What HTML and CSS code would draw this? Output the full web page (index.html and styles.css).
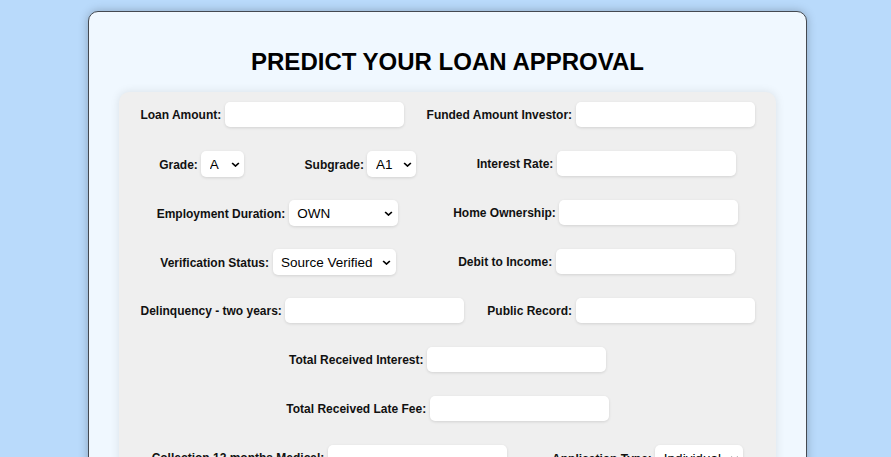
FILE: index.html
```html
<!DOCTYPE html>
<html lang="en">
<head>
<meta charset="utf-8">
<title>Predict Your Loan Approval</title>
<link rel="stylesheet" href="styles.css">
</head>
<body>
<div class="container">
  <h1 class="title">PREDICT YOUR LOAN APPROVAL</h1>
  <form class="form">
    <div class="row">
      <label class="field">Loan Amount: <input class="input" type="text"></label>
      <label class="field">Funded Amount Investor: <input class="input" type="text"></label>
    </div>
    <div class="row">
      <label class="field">Grade: <select class="select sel-grade"><option>A</option><option>B</option><option>C</option></select></label>
      <label class="field">Subgrade: <select class="select sel-sub"><option>A1</option><option>A2</option></select></label>
      <label class="field">Interest Rate: <input class="input" type="text"></label>
    </div>
    <div class="row">
      <label class="field">Employment Duration: <select class="select sel-emp"><option>OWN</option><option>RENT</option><option>MORTGAGE</option></select></label>
      <label class="field">Home Ownership: <input class="input" type="text"></label>
    </div>
    <div class="row">
      <label class="field">Verification Status: <select class="select sel-ver"><option>Source Verified</option><option>Verified</option><option>Not Verified</option></select></label>
      <label class="field">Debit to Income: <input class="input" type="text"></label>
    </div>
    <div class="row">
      <label class="field">Delinquency - two years: <input class="input" type="text"></label>
      <label class="field">Public Record: <input class="input" type="text"></label>
    </div>
    <div class="row">
      <label class="field">Total Received Interest: <input class="input" type="text"></label>
    </div>
    <div class="row">
      <label class="field">Total Received Late Fee: <input class="input" type="text"></label>
    </div>
    <div class="row">
      <label class="field">Collection 12 months Medical: <input class="input" type="text"></label>
      <label class="field">Application Type: <select class="select sel-app"><option>Individual</option><option>Joint</option></select></label>
    </div>
  </form>
</div>
</body>
</html>
```

FILE: styles.css
```css
html, body {
  overflow: hidden;
}
body {
  margin: 0;
  padding: 11px 84px 30px 88px;
  background: #b9dafb;
  font-family: "Liberation Sans", Arial, sans-serif;
}
.container {
  border: 1px solid #444a52;
  border-radius: 10px;
  background: #f0f8ff;
  padding: 20px 30px 30px;
  box-shadow: 0 0 10px rgba(0, 0, 0, 0.25);
}
.title {
  margin: 16px 0;
  font-size: 24px;
  line-height: 27.6px;
  font-weight: bold;
  text-align: center;
  color: #000;
}
.form {
  display: flex;
  flex-direction: column;
  gap: 24px;
  padding: 10.5px 10px 10px;
  background: #efefef;
  border-radius: 10px;
  box-shadow: 0 0 10px rgba(0, 0, 0, 0.1);
}
.row {
  display: flex;
  justify-content: space-around;
  align-items: flex-start;
  height: 25px;
}
.field {
  display: flex;
  align-items: center;
  gap: 3.5px;
  padding-top: 1px;
  font-size: 12px;
  font-weight: bold;
  color: #111;
  white-space: nowrap;
}
.field .input,
.field .select {
  margin-top: -1px;
}
.input {
  width: 179px;
  height: 25px;
  box-sizing: border-box;
  border: none;
  border-radius: 5px;
  background: #fff;
  box-shadow: 0 1px 3px rgba(0, 0, 0, 0.12);
  padding: 4px 8px;
  font-family: "Liberation Sans", Arial, sans-serif;
  font-size: 13px;
  outline: none;
}
.select {
  -webkit-appearance: none;
  appearance: none;
  height: 26px;
  box-sizing: border-box;
  border: none;
  border-radius: 5px;
  background: #fff url("data:image/svg+xml,%3Csvg xmlns='http://www.w3.org/2000/svg' width='10' height='6' viewBox='0 0 10 6'%3E%3Cpath d='M1.2 1.2L5 4.8L8.8 1.2' fill='none' stroke='%23000' stroke-width='2'/%3E%3C/svg%3E") no-repeat right 5px center / 8.5px 5px;
  box-shadow: 0 1px 3px rgba(0, 0, 0, 0.12);
  padding: 0 16px 0 8.5px;
  font-family: "Liberation Sans", Arial, sans-serif;
  font-size: 13.5px;
  color: #000;
  outline: none;
}
.sel-grade { width: 43px; }
.sel-sub { width: 49px; }
.sel-emp { width: 109px; }
.sel-ver { width: 123px; }
.sel-app { width: 88px; }
```
